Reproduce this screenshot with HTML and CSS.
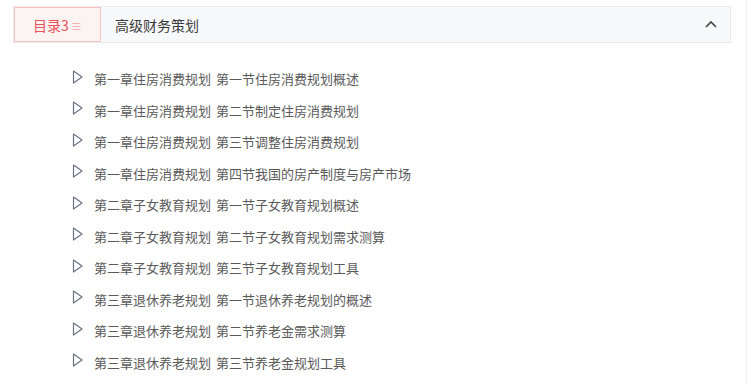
FILE: index.html
```html
<!DOCTYPE html>
<html lang="zh-CN">
<head>
  <meta charset="UTF-8">
  <meta name="viewport" content="width=device-width, initial-scale=1.0">
  <title>高级财务策划</title>
  <link rel="stylesheet" href="styles.css">
</head>
<body>
  <div id="catalog">
    <div class="catalog-head">
      <div class="catalog-tab">目录3 <span class="tab-icon">≡</span></div>
      <div class="catalog-title">高级财务策划</div>
      <svg class="toggle" width="12" height="8" viewBox="0 0 12 8">
        <path d="M1 7 L6 2 L11 7" fill="none" stroke="#444" stroke-width="1.6"/>
      </svg>
    </div>
    <ul class="lesson-list">
      <li><svg class="play" width="11" height="14" viewBox="0 0 11 14"><path d="M1.5 1 L10 7 L1.5 13 Z" fill="none" stroke="#6b7282" stroke-width="1.2" stroke-linejoin="round"/></svg>第一章住房消费规划 第一节住房消费规划概述</li>
      <li><svg class="play" width="11" height="14" viewBox="0 0 11 14"><path d="M1.5 1 L10 7 L1.5 13 Z" fill="none" stroke="#6b7282" stroke-width="1.2" stroke-linejoin="round"/></svg>第一章住房消费规划 第二节制定住房消费规划</li>
      <li><svg class="play" width="11" height="14" viewBox="0 0 11 14"><path d="M1.5 1 L10 7 L1.5 13 Z" fill="none" stroke="#6b7282" stroke-width="1.2" stroke-linejoin="round"/></svg>第一章住房消费规划 第三节调整住房消费规划</li>
      <li><svg class="play" width="11" height="14" viewBox="0 0 11 14"><path d="M1.5 1 L10 7 L1.5 13 Z" fill="none" stroke="#6b7282" stroke-width="1.2" stroke-linejoin="round"/></svg>第一章住房消费规划 第四节我国的房产制度与房产市场</li>
      <li><svg class="play" width="11" height="14" viewBox="0 0 11 14"><path d="M1.5 1 L10 7 L1.5 13 Z" fill="none" stroke="#6b7282" stroke-width="1.2" stroke-linejoin="round"/></svg>第二章子女教育规划 第一节子女教育规划概述</li>
      <li><svg class="play" width="11" height="14" viewBox="0 0 11 14"><path d="M1.5 1 L10 7 L1.5 13 Z" fill="none" stroke="#6b7282" stroke-width="1.2" stroke-linejoin="round"/></svg>第二章子女教育规划 第二节子女教育规划需求测算</li>
      <li><svg class="play" width="11" height="14" viewBox="0 0 11 14"><path d="M1.5 1 L10 7 L1.5 13 Z" fill="none" stroke="#6b7282" stroke-width="1.2" stroke-linejoin="round"/></svg>第二章子女教育规划 第三节子女教育规划工具</li>
      <li><svg class="play" width="11" height="14" viewBox="0 0 11 14"><path d="M1.5 1 L10 7 L1.5 13 Z" fill="none" stroke="#6b7282" stroke-width="1.2" stroke-linejoin="round"/></svg>第三章退休养老规划 第一节退休养老规划的概述</li>
      <li><svg class="play" width="11" height="14" viewBox="0 0 11 14"><path d="M1.5 1 L10 7 L1.5 13 Z" fill="none" stroke="#6b7282" stroke-width="1.2" stroke-linejoin="round"/></svg>第三章退休养老规划 第二节养老金需求测算</li>
      <li><svg class="play" width="11" height="14" viewBox="0 0 11 14"><path d="M1.5 1 L10 7 L1.5 13 Z" fill="none" stroke="#6b7282" stroke-width="1.2" stroke-linejoin="round"/></svg>第三章退休养老规划 第三节养老金规划工具</li>
    </ul>
  </div>
</body>
</html>
```

FILE: styles.css
```css
body {
  margin: 0;
  font-family: "Noto Sans CJK SC", "Noto Sans", sans-serif;
  background-color: #ffffff;
  color: #333;
  border-right: 1px solid #eeeeee;
  height: 384px;
  box-sizing: border-box;
  overflow: hidden;
}

#catalog {
  padding: 6px 0 0 13px;
  width: 718px;
}

.catalog-head {
  display: flex;
  align-items: stretch;
  height: 37px;
  box-sizing: border-box;
  border: 1px solid #e9eaec;
  background-color: #f8f9fa;
}

.catalog-tab {
  width: 87px;
  box-sizing: border-box;
  border: 1px solid #f6c3c3;
  background-color: #fcf3f3;
  color: #ec5058;
  font-size: 14px;
  display: flex;
  align-items: center;
  justify-content: center;
  gap: 2px;
}

.tab-icon {
  font-size: 11px;
  color: #f3a4a4;
  margin-top: 2px;
}

.catalog-title {
  flex: 1;
  display: flex;
  align-items: center;
  padding-left: 14px;
  font-size: 14px;
  color: #3a3a3a;
}

.toggle {
  align-self: center;
  margin-right: 13px;
  margin-top: -1px;
}

.lesson-list {
  list-style: none;
  margin: 20px 0 0 0;
  padding: 0 0 0 59px;
}

.lesson-list li {
  height: 31.5px;
  display: flex;
  align-items: center;
  font-size: 13px;
  word-spacing: 2px;
  color: #5a5a5a;
}

.play {
  margin-right: 11px;
  margin-top: -4px;
  flex-shrink: 0;
}
```
